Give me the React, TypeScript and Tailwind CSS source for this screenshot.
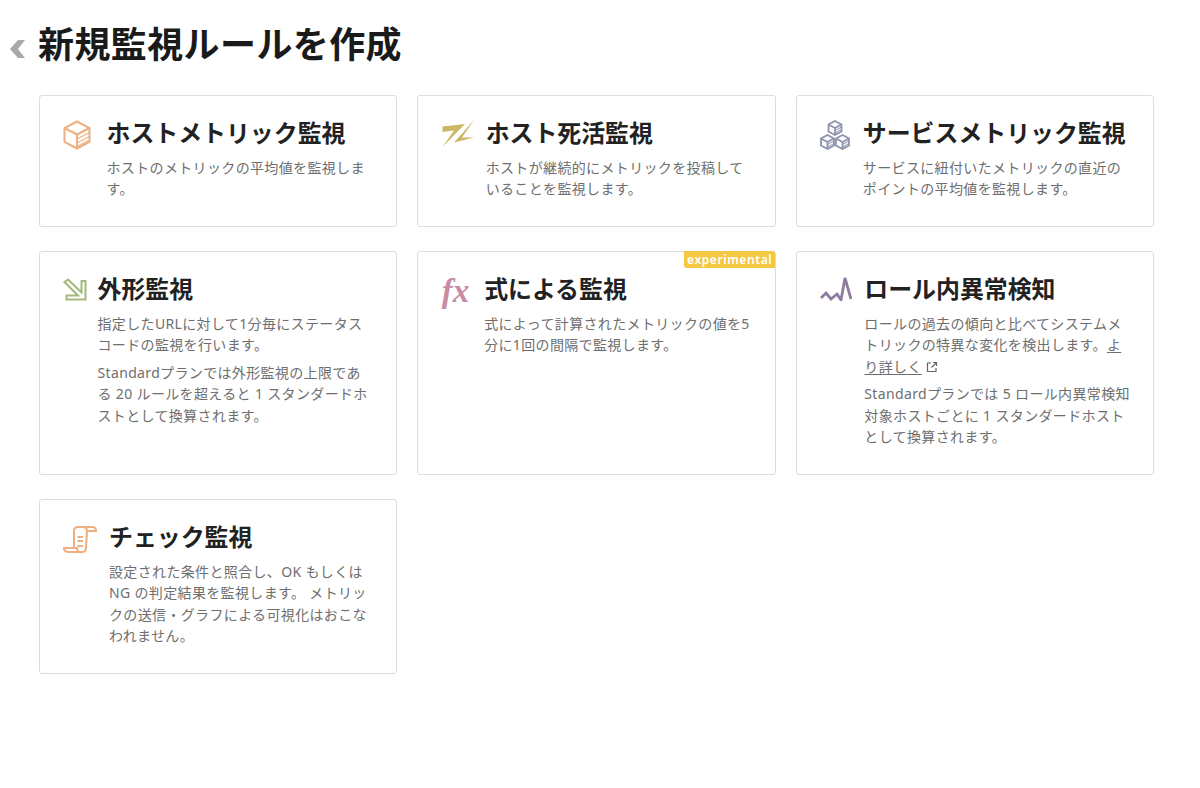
import React from 'react';

const BoxIcon = () => (
  <svg width="28" height="30" viewBox="0 0 28 30" fill="none" stroke="#eeb083" strokeWidth="2" className="mt-[3px] shrink-0">
    <path d="M14 1.500 26.500 8v14L14 28.500 1.500 22V8Z" />
    <path d="M1.500 8 14 14.500 26.500 8M14 14.500v14" />
    <path d="M14 19l12.500-6.500M14 23l12.500-6.500M14 26.500l12.500-6.500" strokeWidth="1.400" />
  </svg>
);

const AliveIcon = () => (
  <svg width="32" height="27" viewBox="0 0 32 27" fill="#cdb665" className="shrink-0">
    <path d="M0.500 6.500 23 4 0.500 27 12 10.500 0.500 12Z" />
    <path d="M32 0 12 22.500 32 17.500 20 17.500Z" />
  </svg>
);

const Cube = ({ x, y }: { x: number; y: number }) => (
  <g transform={`translate(${x} ${y})`}>
    <path d="M7.500 1 14 4.500v7L7.500 15 1 11.500V4.500Z" fill="#fff" />
    <path d="M1 4.500 7.500 8 14 4.500M7.500 8v7" />
    <path d="M7.500 10.500 14 7M7.500 13 14 9.500" strokeWidth="1" />
  </g>
);

const CubesIcon = () => (
  <svg width="30" height="30" viewBox="0 0 30 30" fill="none" stroke="#8e93ad" strokeWidth="1.800" className="mt-[3px] shrink-0">
    <Cube x={7.500} y={0} />
    <Cube x={0} y={14} />
    <Cube x={15} y={14} />
  </svg>
);

const ArrowIcon = () => (
  <svg width="24" height="23" viewBox="0 0 24 23" fill="none" stroke="#a3b97c" strokeWidth="2" className="shrink-0">
    <path d="M1.500 4 5 1.500 18.500 14.500V3H22.500V21.500H3.500V17.500H15Z" />
  </svg>
);

const FxIcon = () => (
  <span className="mt-[3px] w-[30px] shrink-0 font-['Liberation_Serif',serif] text-[33px] leading-[30px] font-bold italic whitespace-nowrap text-[#c88ba4]">
    fx
  </span>
);

const AnomalyIcon = () => (
  <svg width="32" height="26" viewBox="0 0 32 26" fill="none" stroke="#8d7c9e" strokeWidth="2.800" className="mb-[2px] shrink-0">
    <path d="M1 23 6 18l5 6 6-5 4 6L25 3l6 21" />
  </svg>
);

const ScrollIcon = () => (
  <svg width="34" height="30" viewBox="0 0 34 30" fill="none" stroke="#eeb083" strokeWidth="2" className="mt-[5px] shrink-0">
    <path d="M11 23V6c0-2.500 1.500-4 4-4H29c2.500 0 4 1.500 4 4H24" />
    <path d="M20 2c2.500 0 4 1.500 4 4L23 23c0 2.500-1.500 4-4 4H6c-3 0-5-1.500-5-4H14c0 2 1 4 3 4" />
    <path d="M14.500 12H20M14.500 16H20M14.500 21H20" />
  </svg>
);

const ExternalIcon = () => (
  <svg width="12" height="12" viewBox="0 0 12 12" fill="none" stroke="#666" strokeWidth="1.200" className="ml-1 inline-block align-[-1px]">
    <path d="M5 2H1.500v8.500H10V7" />
    <path d="M7 1.500h3.500V5M10.500 1.500 5.500 6.500" />
  </svg>
);

interface CardProps {
  icon: React.ReactNode;
  title: string;
  gap: string;
  badge?: boolean;
  className?: string;
  children: React.ReactNode;
}

const Card = ({ icon, title, gap, badge, className, children }: CardProps) => (
  <div className={`relative rounded-[3px] border border-[#dddddd] bg-white pt-[21px] pr-[23px] pl-[23.500px] ${className ?? ''}`}>
    {badge && (
      <span className="absolute -top-px right-[-0.500px] rounded-tr-[3px] rounded-bl-[3px] bg-[#f5c842] px-[3px] text-[12px] leading-[17px] font-semibold tracking-[0.600px] text-white">
        experimental
      </span>
    )}
    <div className={`flex ${gap}`}>
      <div className="flex h-[32px] shrink-0 items-center">{icon}</div>
      <div className="min-w-0 flex-1">
        <h2 className="text-[23.900px] leading-[32px] font-bold whitespace-nowrap text-[#222222]">{title}</h2>
        <div className="mt-[8px] space-y-[6px] text-[14px] leading-[21.400px] tracking-[0.350px] text-[#6e6e6e]">{children}</div>
      </div>
    </div>
  </div>
);

export default function App() {
  return (
    <div className="min-h-[788px] bg-white font-['Noto_Sans','Noto_Sans_CJK_JP',sans-serif]">
      <div className="flex items-center pt-[22px] pl-[9.500px]">
        <svg width="15" height="18" viewBox="0 0 15 18" className="mt-[8px] mr-[13.500px] shrink-0" fill="#a9a9a9">
          <path d="M8 0h7L8 9l7 9H8L0 9Z" />
        </svg>
        <h1 className="text-[36px] leading-[46px] font-bold tracking-[0.400px] text-[#1a1a1a]">新規監視ルールを作成</h1>
      </div>
      <div className="mt-[27px] ml-[38.500px] grid w-[1116px] grid-cols-3 gap-x-[20px] gap-y-[24.500px]">
        <Card icon={<BoxIcon />} title="ホストメトリック監視" gap="gap-[15.500px]" className="h-[131.500px]">
          <p>ホストのメトリックの平均値を監視します。</p>
        </Card>
        <Card icon={<AliveIcon />} title="ホスト死活監視" gap="gap-[12px]" className="h-[131.500px]">
          <p>ホストが継続的にメトリックを投稿していることを監視します。</p>
        </Card>
        <Card icon={<CubesIcon />} title="サービスメトリック監視" gap="gap-[12.500px]" className="h-[131.500px]">
          <p>サービスに紐付いたメトリックの直近のポイントの平均値を監視します。</p>
        </Card>
        <Card icon={<ArrowIcon />} title="外形監視" gap="gap-[10.500px]" className="h-[223.500px]">
          <p>指定したURLに対して1分毎にステータスコードの監視を行います。</p>
          <p>Standardプランでは外形監視の上限である 20 ルールを超えると 1 スタンダードホストとして換算されます。</p>
        </Card>
        <Card icon={<FxIcon />} title="式による監視" gap="gap-[12.500px]" badge className="h-[223.500px]">
          <p>式によって計算されたメトリックの値を5分に1回の間隔で監視します。</p>
        </Card>
        <Card icon={<AnomalyIcon />} title="ロール内異常検知" gap="gap-[12px]" className="h-[223.500px]">
          <p>
            ロールの過去の傾向と比べてシステムメトリックの特異な変化を検出します。
            <a className="underline underline-offset-2">より詳しく</a>
            <ExternalIcon />
          </p>
          <p>Standardプランでは 5 ロール内異常検知対象ホストごとに 1 スタンダードホストとして換算されます。</p>
        </Card>
        <Card icon={<ScrollIcon />} title="チェック監視" gap="gap-[12px]" className="h-[174.500px]">
          <p>設定された条件と照合し、OK もしくは NG の判定結果を監視します。 メトリックの送信・グラフによる可視化はおこなわれません。</p>
        </Card>
      </div>
    </div>
  );
}
